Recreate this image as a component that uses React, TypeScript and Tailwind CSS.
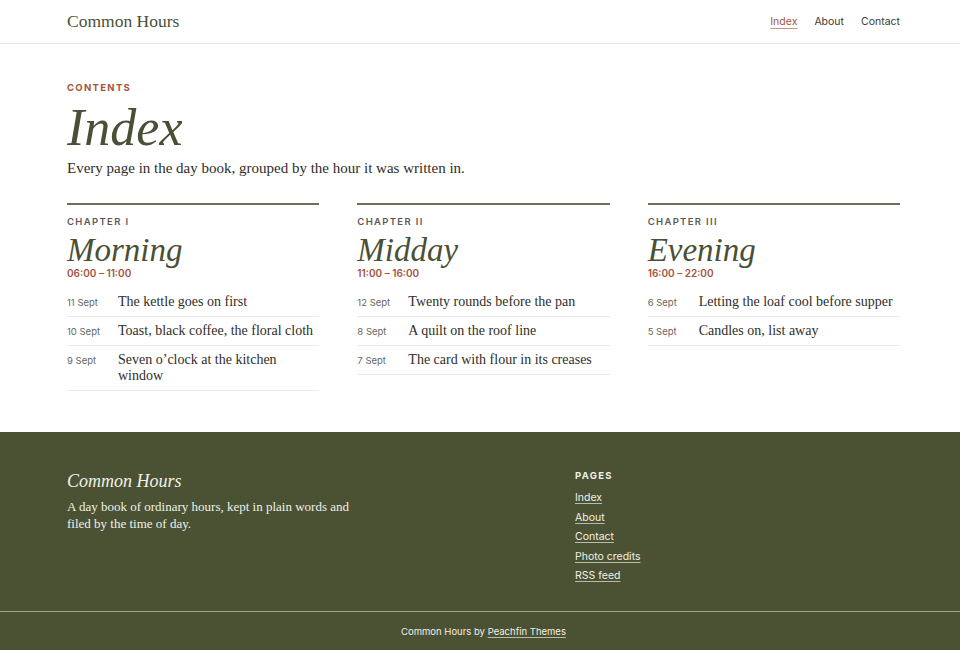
import * as React from 'react';

const serif = "font-['Liberation_Serif','DejaVu_Serif',serif]";
const sans = "font-['Inter','Liberation_Sans',sans-serif]";

type Entry = { date: string; title: string };
type Chapter = { label: string; name: string; hours: string; entries: Entry[] };

const chapters: Chapter[] = [
  {
    label: 'Chapter I',
    name: 'Morning',
    hours: '06:00 – 11:00',
    entries: [
      { date: '11 Sept', title: 'The kettle goes on first' },
      { date: '10 Sept', title: 'Toast, black coffee, the floral cloth' },
      { date: '9 Sept', title: 'Seven o’clock at the kitchen window' },
    ],
  },
  {
    label: 'Chapter II',
    name: 'Midday',
    hours: '11:00 – 16:00',
    entries: [
      { date: '12 Sept', title: 'Twenty rounds before the pan' },
      { date: '8 Sept', title: 'A quilt on the roof line' },
      { date: '7 Sept', title: 'The card with flour in its creases' },
    ],
  },
  {
    label: 'Chapter III',
    name: 'Evening',
    hours: '16:00 – 22:00',
    entries: [
      { date: '6 Sept', title: 'Letting the loaf cool before supper' },
      { date: '5 Sept', title: 'Candles on, list away' },
    ],
  },
];

const footerLinks = ['Index', 'About', 'Contact', 'Photo credits', 'RSS feed'];

function ChapterColumn({ chapter }: { chapter: Chapter }) {
  return (
    <section className="border-t-2 border-[#6b6f55] pt-[10px]">
      <div className={`${sans} text-[9.5px] font-semibold uppercase tracking-[0.14em] text-[#5a5a55]`}>
        {chapter.label}
      </div>
      <h2 className={`${serif} mt-[4px] text-[33px] italic leading-[34px] text-[#4a5035]`}>
        {chapter.name}
      </h2>
      <div className={`${sans} text-[10px] font-semibold leading-[12px] text-[#a4543f]`}>
        {chapter.hours}
      </div>
      <ul className="mt-[8.5px]">
        {chapter.entries.map((e) => (
          <li key={e.date} className="flex items-baseline border-b border-[#ebebe6] py-[6px]">
            <span className={`${sans} w-[51px] shrink-0 text-[9.5px] text-[#66665f]`}>{e.date}</span>
            <span className={`${serif} text-[14px] leading-[16px] text-[#2e2e2a]`}>{e.title}</span>
          </li>
        ))}
      </ul>
    </section>
  );
}

export default function App() {
  return (
    <div className="min-h-[650px] bg-white">
      <header className="border-b border-[#e4e4e0]">
        <div className="flex h-[43px] items-center justify-between pl-[67px] pr-[60px]">
          <a className={`${serif} text-[17.5px] text-[#4a5035]`}>Common Hours</a>
          <nav className={`${sans} flex gap-[17px] text-[10.5px] text-[#3a3a35]`}>
            <a className="text-[#a4543f] underline decoration-[#c99486] underline-offset-[3px]">Index</a>
            <a>About</a>
            <a>Contact</a>
          </nav>
        </div>
      </header>

      <main className="pl-[67px] pr-[60px] pt-[37px] pb-[41px]">
        <div className={`${sans} text-[9.5px] font-bold uppercase tracking-[0.14em] text-[#a4543f]`}>
          Contents
        </div>
        <h1 className={`${serif} mt-[3px] text-[52px] italic leading-[60px] text-[#4a5035]`}>Index</h1>
        <p className={`${serif} mt-[-1px] text-[15px] text-[#2e2e2a]`}>
          Every page in the day book, grouped by the hour it was written in.
        </p>
        <div className="mt-[23px] grid grid-cols-3 gap-[38px]">
          {chapters.map((c) => (
            <ChapterColumn key={c.name} chapter={c} />
          ))}
        </div>
      </main>

      <footer className="bg-[#4a5233] text-[#f1efe6]">
        <div className="grid grid-cols-[508px_1fr] pl-[67px] pr-[60px] pt-[35px] pb-[25px]">
          <div>
            <div className={`${serif} mt-[1px] text-[18px] italic`}>Common Hours</div>
            <p className={`${serif} mt-[3px] w-[300px] text-[13px] leading-[17px]`}>
              A day book of ordinary hours, kept in plain words and filed by the time of day.
            </p>
          </div>
          <div className="mt-[2px]">
            <div className={`${sans} text-[9.5px] font-bold uppercase tracking-[0.14em]`}>Pages</div>
            <ul className={`${sans} mt-[5px] text-[10.5px]`}>
              {footerLinks.map((l) => (
                <li key={l} className="h-[19.5px] leading-[19.5px]">
                  <a className="underline decoration-[#b9bba8] underline-offset-[2px]">{l}</a>
                </li>
              ))}
            </ul>
          </div>
        </div>
        <div className="border-t border-[#9ea08c] pl-[7px] pt-[5px] pb-[20px] text-center">
          <span className={`${sans} text-[9.5px]`}>
            Common Hours by{' '}
            <a className="underline decoration-[#b9bba8] underline-offset-[2px]">Peachfin Themes</a>
          </span>
        </div>
      </footer>
    </div>
  );
}
